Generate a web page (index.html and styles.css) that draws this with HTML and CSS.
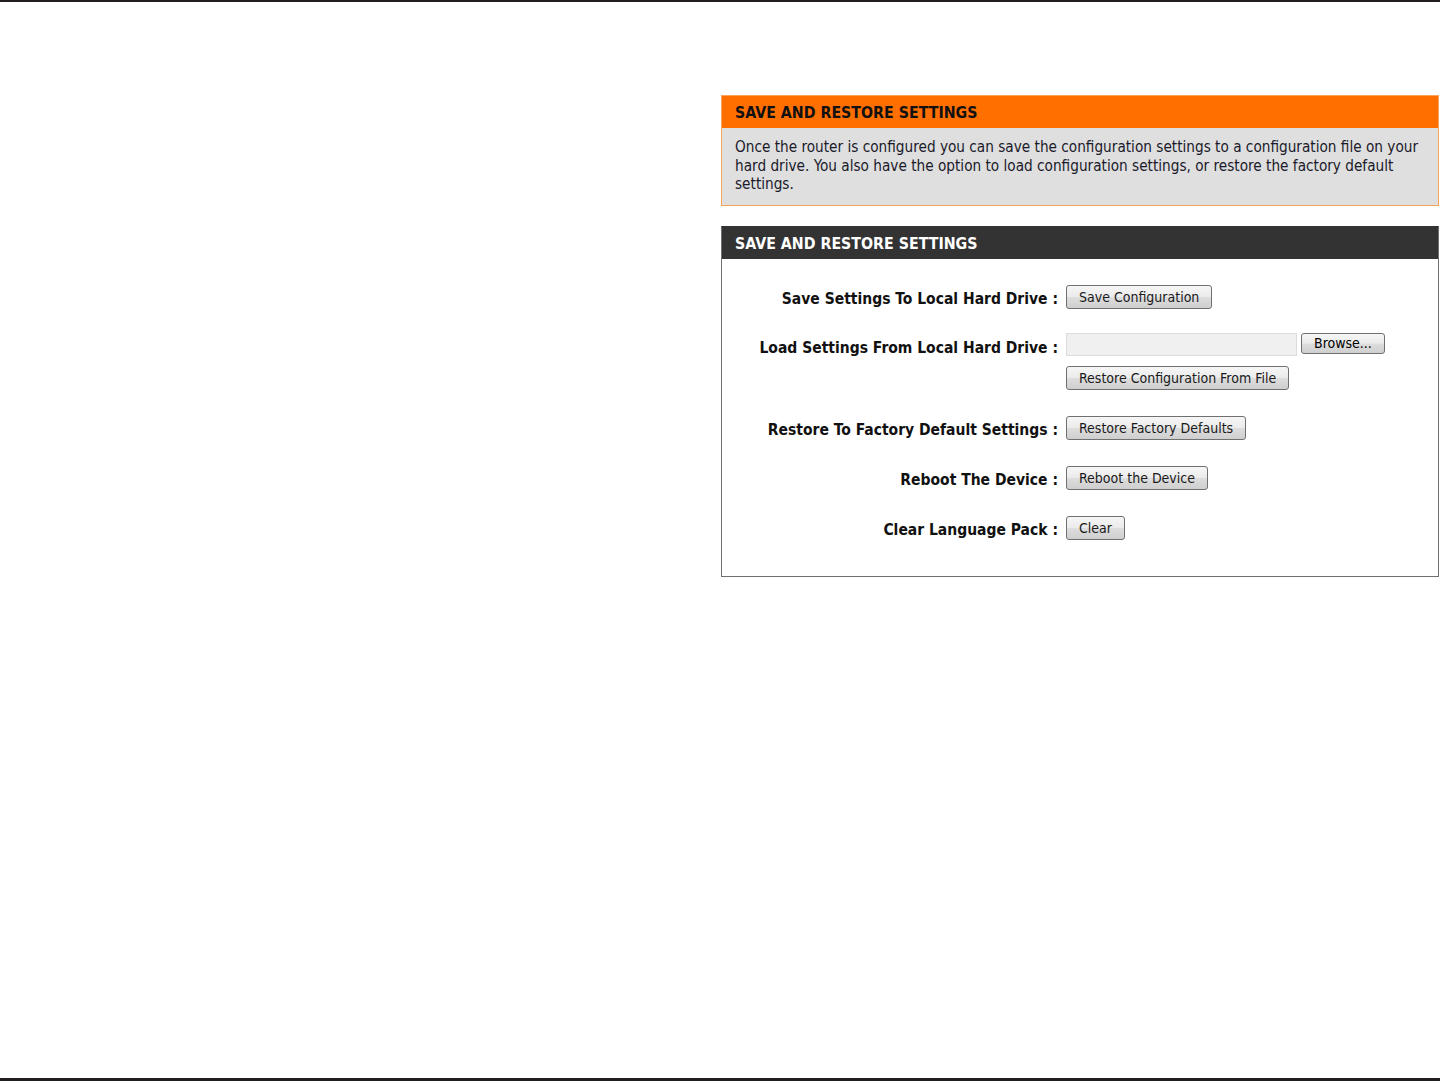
FILE: index.html
```html
<!DOCTYPE html>
<html>
<head>
<meta charset="utf-8">
<link rel="stylesheet" href="styles.css">
</head>
<body>
<div class="rule top"></div>
<div class="page">
  <div class="spacer"></div>
  <div class="content">
    <div class="box info">
      <div class="box-head orange">SAVE AND RESTORE SETTINGS</div>
      <div class="info-body">Once the router is configured you can save the configuration settings to a configuration file on your hard drive. You also have the option to load configuration settings, or restore the factory default settings.</div>
    </div>
    <div class="box settings">
      <div class="box-head dark">SAVE AND RESTORE SETTINGS</div>
      <div class="settings-body">
        <div class="row r1">
          <div class="label">Save Settings To Local Hard Drive&nbsp;:</div>
          <div class="ctrl"><button class="btn">Save Configuration</button></div>
        </div>
        <div class="row r2">
          <div class="label load">Load Settings From Local Hard Drive&nbsp;:</div>
          <div class="ctrl">
            <div class="file-line"><span class="file-field"></span><button class="btn browse">Browse...</button></div>
            <button class="btn restore-file">Restore Configuration From File</button>
          </div>
        </div>
        <div class="row">
          <div class="label">Restore To Factory Default Settings&nbsp;:</div>
          <div class="ctrl"><button class="btn">Restore Factory Defaults</button></div>
        </div>
        <div class="row">
          <div class="label">Reboot The Device&nbsp;:</div>
          <div class="ctrl"><button class="btn">Reboot the Device</button></div>
        </div>
        <div class="row">
          <div class="label">Clear Language Pack&nbsp;:</div>
          <div class="ctrl"><button class="btn">Clear</button></div>
        </div>
      </div>
    </div>
  </div>
</div>
<div class="rule bottom"></div>
</body>
</html>
```
FILE: styles.css
```css
html, body {
  margin: 0;
  padding: 0;
  background: #fff;
}
body {
  font-family: "DejaVu Sans Condensed", "DejaVu Sans", sans-serif;
  color: #000;
  width: 1441px;
  height: 1081px;
  display: flex;
  flex-direction: column;
  overflow: hidden;
}
.rule {
  background: #231f20;
  width: 1440px;
}
.rule.top { height: 2px; }
.rule.bottom { height: 3px; margin-top: auto; }
.page {
  display: flex;
  flex: 1;
}
.spacer { width: 721px; }
.content {
  width: 718px;
  padding-top: 93px;
}
.box {
  box-sizing: border-box;
  width: 718px;
}
.info {
  border: 1px solid #f8a25a;
  background: #dfdfdf;
}
.box-head {
  font-weight: bold;
  font-size: 15.8px;
  padding-left: 13px;
  height: 32px;
  line-height: 34px;
}
.box-head.orange {
  background: #ff6f00;
  color: #111;
}
.box-head.dark {
  background: #333333;
  color: #fff;
}
.info-body {
  font-size: 15.2px;
  line-height: 18.7px;
  color: #1a1a2a;
  padding: 10px 13px 10px 13px;
  height: 57px;
}
.settings {
  margin-top: 20px;
  border: 1px solid #707070;
  border-top-color: #333;
  background: #fff;
}
.settings-body {
  padding: 26px 0 36px 0;
  display: flex;
  flex-direction: column;
  gap: 26px;
}
.row {
  display: flex;
  align-items: center;
}
.row.r2 { align-items: flex-start; margin-top: -2px; }
.label {
  width: 336px;
  text-align: right;
  font-weight: bold;
  font-size: 15.5px;
  padding-right: 8px;
  padding-top: 3px;
  color: #111;
}
.label.load { padding-top: 6px; }
.ctrl {
  display: flex;
  flex-direction: column;
  gap: 10px;
}
.btn {
  font-family: "DejaVu Sans Condensed", "DejaVu Sans", sans-serif;
  font-size: 14px;
  color: #1a1a1a;
  height: 24px;
  padding: 0 12px;
  border: 1px solid #707070;
  border-radius: 3px;
  background: linear-gradient(#f6f6f6 0%, #ebebeb 48%, #dddddd 52%, #cfcfcf 100%);
  align-self: flex-start;
  line-height: 20px;
}
.file-line {
  display: flex;
  align-items: center;
  gap: 4px;
}
.file-field {
  display: block;
  width: 229px;
  height: 21px;
  background: #f0f0f0;
  border: 1px solid #dcdcdc;
}
.btn.browse {
  height: 21px;
  padding: 0 12px;
  font-size: 14px;
  color: #000;
  line-height: 17px;
}
```
